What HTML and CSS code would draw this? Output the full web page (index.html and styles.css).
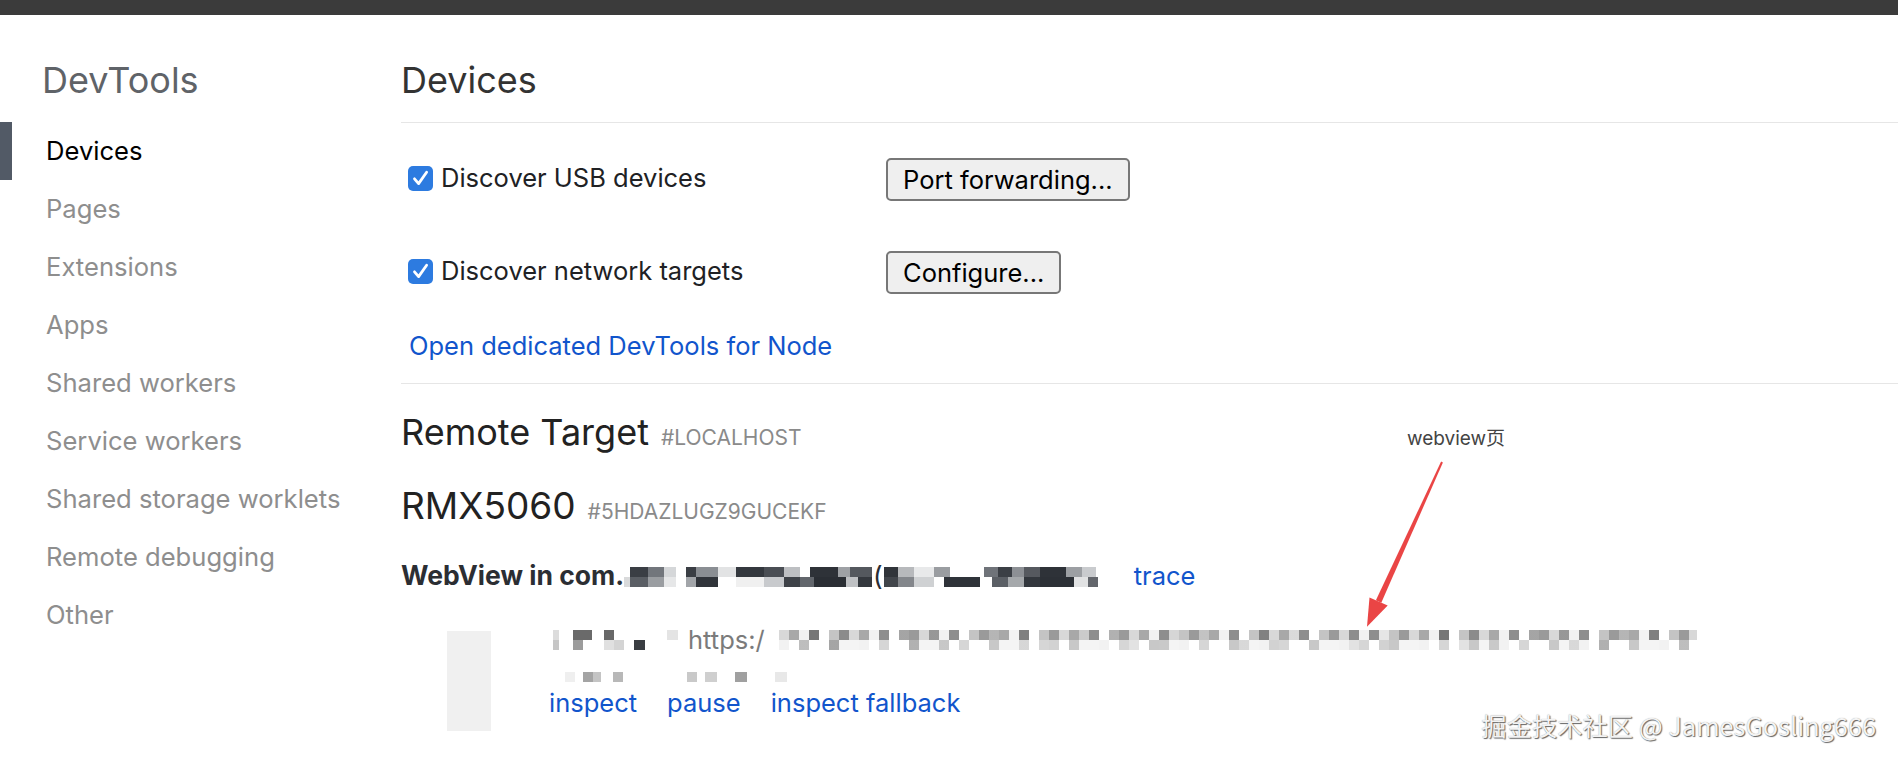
FILE: index.html
```html
<!DOCTYPE html>
<html lang="en">
<head>
<meta charset="utf-8">
<title>Inspect with Chrome Developer Tools</title>
<link rel="stylesheet" href="styles.css">
</head>
<body>
<div class="topbar"></div>
<div class="page">
  <nav class="sidebar">
    <h1 class="brand">DevTools</h1>
    <ul class="nav">
      <li class="nav-item active">Devices</li>
      <li class="nav-item">Pages</li>
      <li class="nav-item">Extensions</li>
      <li class="nav-item">Apps</li>
      <li class="nav-item">Shared workers</li>
      <li class="nav-item">Service workers</li>
      <li class="nav-item">Shared storage worklets</li>
      <li class="nav-item">Remote debugging</li>
      <li class="nav-item">Other</li>
    </ul>
  </nav>
  <main class="content">
    <header class="section-head"><h2 class="section-title">Devices</h2></header>
    <div class="options">
      <div class="option-row">
        <label class="check"><span class="box"><svg width="25" height="25" viewBox="0 0 25 25"><path d="M6.5 12.8 L10.6 17.6 L18.6 6.2" fill="none" stroke="#fff" stroke-width="2.8" stroke-linecap="round" stroke-linejoin="round"/></svg></span>Discover USB devices</label>
        <button class="btn">Port forwarding...</button>
      </div>
      <div class="option-row">
        <label class="check"><span class="box"><svg width="25" height="25" viewBox="0 0 25 25"><path d="M6.5 12.8 L10.6 17.6 L18.6 6.2" fill="none" stroke="#fff" stroke-width="2.8" stroke-linecap="round" stroke-linejoin="round"/></svg></span>Discover network targets</label>
        <button class="btn">Configure...</button>
      </div>
      <a class="node-link" href="#">Open dedicated DevTools for Node</a>
    </div>
    <section class="remote">
      <h3 class="remote-title">Remote Target<span class="tag">#LOCALHOST</span></h3>
      <h3 class="device-title">RMX5060<span class="tag">#5HDAZLUGZ9GUCEKF</span></h3>
      <div class="browser-title"><b class="browser-name">WebView in com.</b><span class="mosaic pkg-a"></span><b class="browser-name paren">(</b><span class="mosaic pkg-b"></span><a class="action trace" href="#">trace</a></div>
      <div class="target">
        <div class="thumb"></div>
        <div class="target-info">
          <div class="url-line"><span class="mosaic url-a"></span><span class="url-text">https:/</span><span class="mosaic url-b"></span></div>
          <div class="mosaic url-c"></div>
          <div class="actions">
            <a class="action" href="#">inspect</a>
            <a class="action" href="#">pause</a>
            <a class="action" href="#">inspect fallback</a>
          </div>
        </div>
      </div>
    </section>
  </main>
</div>
<div class="annotation">webview页</div>
<svg class="arrow" width="1898" height="766" viewBox="0 0 1898 766">
  <polygon points="1442.9,462.4 1441.1,461.6 1375.9,600.3 1381.3,602.7" fill="#ea4545"/>
  <polygon points="1367,626.7 1369.5,597.4 1387.7,605.6" fill="#ea4545"/>
</svg>
<div class="watermark">掘金技术社区 @ JamesGosling666</div>
</body>
</html>
```
FILE: styles.css
```css
* { box-sizing: border-box; }
html, body { margin: 0; padding: 0; }
body {
  width: 1898px;
  height: 766px;
  overflow: hidden;
  position: relative;
  background: #fff;
  color: #202124;
  font-family: Inter, "Noto Sans CJK SC", sans-serif;
}
.topbar { height: 15px; background: #3b3b3b; }
.page { display: flex; }

/* sidebar */
.sidebar { width: 401px; flex: none; padding-top: 43px; }
.brand {
  margin: 0 0 0 42px;
  height: 44px;
  font-size: 36px;
  line-height: 44px;
  font-weight: 400;
  color: #5f6368;
}
.nav { list-style: none; margin: 20px 0 0; padding: 0; }
.nav-item {
  height: 58px;
  line-height: 58px;
  font-size: 25.6px;
  color: #8e8e8e;
  border-left: 12px solid transparent;
  padding-left: 34px;
  white-space: nowrap;
}
.nav-item.active { color: #000; border-left-color: #525a66; }

/* content */
.content { flex: 1; padding-top: 43px; }
.section-head { padding-bottom: 20px; border-bottom: 1px solid #e6e6e6; }
.section-title {
  margin: 0;
  height: 44px;
  font-size: 36px;
  line-height: 44px;
  font-weight: 400;
  color: #333;
}
.options { padding: 35px 0 22px; border-bottom: 1px solid #e6e6e6; }
.option-row { display: flex; align-items: flex-start; height: 43px; }
.option-row + .option-row { margin-top: 50px; }
.check {
  width: 485px;
  flex: none;
  display: flex;
  align-items: center;
  height: 30px;
  margin-top: 5px;
  padding-left: 7px;
  font-size: 25.5px;
  line-height: 30px;
  color: #202124;
}
.box {
  width: 25px;
  height: 25px;
  flex: none;
  border-radius: 5px;
  background: #2d7be0;
  margin-right: 8px;
  display: flex;
}
.btn {
  height: 43px;
  padding: 0 15px;
  font-family: inherit;
  font-size: 25.5px;
  color: #000;
  background: #efefef;
  border: 2px solid #777;
  border-radius: 5px;
}
.node-link {
  display: block;
  margin: 37px 0 0 8px;
  font-size: 25.5px;
  line-height: 30px;
  color: #1155cc;
  text-decoration: none;
}

/* remote */
.remote { padding-top: 29px; }
.remote-title, .device-title { margin: 0; font-weight: 400; color: #222; }
.remote-title { font-size: 36px; line-height: 38px; }
.device-title { margin-top: 33px; font-size: 37px; line-height: 44px; }
.tag {
  margin-left: 12px;
  font-size: 21px;
  line-height: 1;
  color: #8a8a8a;
  text-transform: uppercase;
}
.browser-title {
  margin-top: 30px;
  height: 34px;
  font-size: 26.5px;
  line-height: 34px;
  white-space: nowrap;
}
.browser-name { font-size: 26.5px; font-weight: 700; color: #2b2e33; }
.paren { font-weight: 400; margin: 0 1px; }
.action { font-size: 25.5px; color: #1155cc; text-decoration: none; }
.trace { margin-left: 20px; }

.mosaic { display: inline-block; height: 20px; vertical-align: -2px; background-repeat: no-repeat; }
.pkg-a {
  width: 248px;
  background-size: 100% 10px;
  background-position: top, bottom;
  background-image:
    linear-gradient(90deg, #fff 0 6px, #3a3e44 6px 24px, #72767c 24px 40px, #d5d7d9 40px 52px, #fff 52px 62px, #3a3e44 62px 72px, #8a8e93 72px 94px, #e2e3e4 94px 112px, #34383e 112px 140px, #4a4e54 140px 160px, #bdbfc2 160px 176px, #fff 176px 186px, #2e3238 186px 214px, #9ea1a5 214px 226px, #54585e 226px 248px),
    linear-gradient(90deg, #d9dadb 0 6px, #5a5e64 6px 24px, #9a9da1 24px 40px, #e6e7e8 40px 52px, #fff 52px 62px, #a2a5a9 62px 72px, #30343a 72px 94px, #fff 94px 112px, #f0f0f0 112px 140px, #c8cacd 140px 160px, #3e4248 160px 176px, #62666c 176px 190px, #2a2e34 190px 222px, #bfc1c4 222px 234px, #34383e 234px 248px);
}
.pkg-b {
  width: 230px;
  background-size: 100% 10px;
  background-position: top, bottom;
  background-image:
    linear-gradient(90deg, #30343a 0 14px, #b7b9bc 14px 30px, #e8e9ea 30px 50px, #9a9da1 50px 66px, #fff 66px 100px, #6f7379 100px 114px, #3b3f45 114px 128px, #8d9095 128px 140px, #56595f 140px 156px, #2e3238 156px 182px, #9c9fa3 182px 198px, #c9cbce 198px 212px, #fff 212px 230px),
    linear-gradient(90deg, #41454b 0 14px, #83868b 14px 30px, #cfd1d3 30px 50px, #fff 50px 60px, #2f3339 60px 96px, #fff 96px 108px, #5b5f65 108px 124px, #a5a8ab 124px 140px, #33373d 140px 156px, #2c3036 156px 190px, #e1e2e3 190px 204px, #63666c 204px 214px, #fff 214px 230px);
}
.target { display: flex; margin-top: 38px; }
.thumb { width: 44px; height: 100px; margin: 1px 0 0 46px; background: #f0f0f0; flex: none; }
.target-info { margin-left: 58px; }
.url-line { display: flex; align-items: flex-start; height: 20px; margin-left: 3px; }
.url-line .mosaic { vertical-align: top; flex: none; }
.url-a {
  width: 126px;
  background-size: 100% 10px;
  background-position: top, bottom;
  background-image:
    linear-gradient(90deg, #fff 0 1px, #dcdcdc 1px 7px, #fff 7px 21px, #6a6a6a 21px 40px, #fff 40px 52px, #686868 52px 62px, #fff 62px 115px, #e4e4e4 115px 126px),
    linear-gradient(90deg, #fff 0 1px, #c6c6c6 1px 7px, #fff 7px 21px, #9c9c9c 21px 31px, #fff 31px 52px, #e0e0e0 52px 62px, #d4d4d4 62px 72px, #fff 72px 82px, #3a3d42 82px 93px, #fff 93px 126px);
}
.url-text {
  margin: -4px 14px 0 10px;
  font-size: 25.5px;
  line-height: 28px;
  color: #7b7b7b;
  white-space: nowrap;
  flex: none;
}
.url-b {
  width: 918px;
  background-size: 100% 10px;
  background-position: top, top, bottom, bottom;
  background-repeat: repeat-x;
  background-blend-mode: multiply;
  background-image:
    repeating-linear-gradient(90deg, #fff 0 30px, #d6d6d6 30px 40px, #fff 40px 60px, #e6e6e6 60px 70px, #fff 70px 90px),
    repeating-linear-gradient(90deg, #d8d8d8 0 10px, #a8a8a8 10px 20px, #f2f2f2 20px 30px, #8e8e8e 30px 40px, #fff 40px 50px, #c4c4c4 50px 60px, #9a9a9a 60px 70px),
    repeating-linear-gradient(90deg, #fff 0 20px, #e2e2e2 20px 30px, #fff 30px 50px, #d2d2d2 50px 60px, #fff 60px 110px),
    repeating-linear-gradient(90deg, #f2f2f2 0 10px, #fff 10px 20px, #d6d6d6 20px 30px, #fff 30px 50px, #c8c8c8 50px 60px, #f4f4f4 60px 80px);
}
.url-c {
  display: block;
  width: 240px;
  height: 10px;
  margin: 22px 0 0 12px;
  background-image: linear-gradient(90deg, #fff 0 4px, #efefef 4px 14px, #fff 14px 22px, #a4a4a4 22px 32px, #c4c4c4 32px 40px, #fff 40px 52px, #b8b8b8 52px 62px, #fff 62px 126px, #c9c9c9 126px 136px, #fff 136px 144px, #cfcfcf 144px 156px, #fff 156px 174px, #a0a0a0 174px 186px, #fff 186px 214px, #e8e8e8 214px 226px, #fff 226px 240px);
}
.actions { display: flex; gap: 30px; margin-top: 6px; line-height: 30px; white-space: nowrap; }

/* overlays */
.annotation {
  position: absolute;
  left: 1407px;
  top: 427px;
  font-size: 19px;
  line-height: 24px;
  color: #444;
  white-space: nowrap;
}
.arrow { position: absolute; left: 0; top: 0; pointer-events: none; }
.watermark {
  position: absolute;
  right: 22px;
  top: 708px;
  font-family: "Noto Sans CJK SC", sans-serif;
  font-size: 25.3px;
  line-height: 34px;
  color: #f3f3f3;
  text-shadow: 1px 1px 1px rgba(0,0,0,0.6), 0 0 1px rgba(0,0,0,0.35);
  white-space: nowrap;
}
```
